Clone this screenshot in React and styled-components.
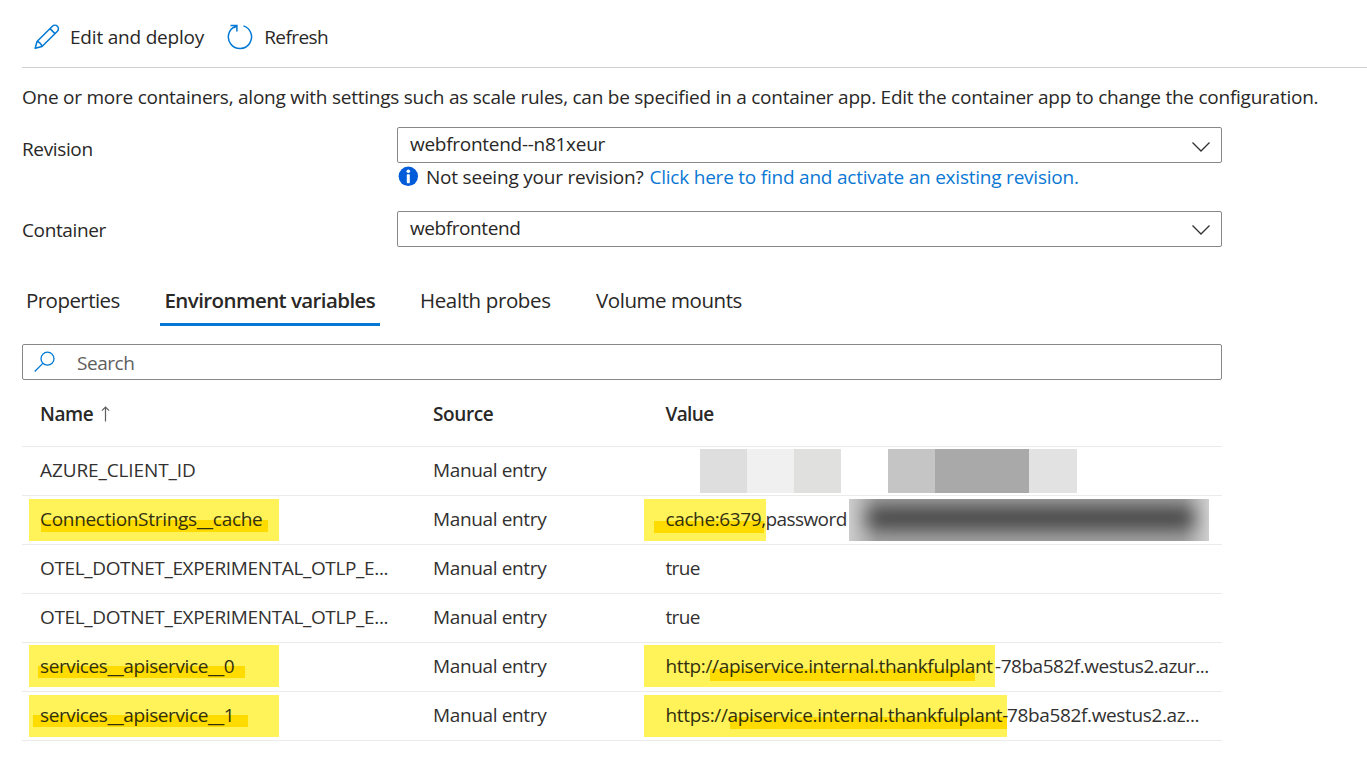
import React from "react";
import styled, { createGlobalStyle } from "styled-components";

const GlobalStyle = createGlobalStyle`
  * { box-sizing: border-box; }
  body {
    margin: 0;
    background: #fff;
    color: #292827;
    font-family: "Open Sans", "Noto Sans", sans-serif;
    font-size: 19px;
    line-height: 26px;
    overflow: hidden;
  }
`;

const Page = styled.main`
  padding-left: 22px;
  height: 766px;
  overflow: hidden;
`;

const Label = styled.span`
  letter-spacing: ${(p) => p.$track || 0}px;
  white-space: pre;
`;

const Toolbar = styled.header`
  display: flex;
  align-items: center;
  height: 68px;
  padding: 6px 0 0 12px;
  border-bottom: 1px solid #d2d2d1;
`;

const ToolButton = styled.button`
  display: flex;
  align-items: center;
  gap: ${(p) => p.$gap}px;
  margin-right: 22.5px;
  padding: 0;
  border: 0;
  background: none;
  color: inherit;
  font: inherit;
`;

const Intro = styled.p`
  margin: 16px 0 0;
  height: 43px;
`;

const Form = styled.section`
  display: flex;
  flex-direction: column;
`;

const Field = styled.div`
  display: grid;
  grid-template-columns: 375px 825px;
  height: ${(p) => p.$height}px;
`;

const FieldName = styled.label`
  padding-top: ${(p) => p.$top}px;
`;

const Select = styled.div`
  display: flex;
  align-items: center;
  justify-content: space-between;
  height: 36px;
  padding: 0 11px 2px 12px;
  border: 1px solid #8a8886;
  border-radius: 2px;

  svg { margin-top: ${(p) => p.$arrowTop}px; }
`;

const Hint = styled.div`
  display: flex;
  align-items: center;
  height: 28px;
  padding-left: 1px;

  svg { margin: 0 8px 2px 0; }
`;

const Link = styled.a`
  margin-left: 6px;
  color: #0b78d4;
`;

const Tabs = styled.nav`
  display: flex;
  height: 45px;
  margin-top: 34px;
`;

const Tab = styled.div`
  width: ${(p) => p.$width}px;
  margin-right: ${(p) => p.$after}px;
  padding: 6px 0 0 ${(p) => p.$inset}px;
  border-bottom: 3px solid ${(p) => (p.$active ? "#0078d4" : "transparent")};
  font-size: 20.5px;
  font-weight: ${(p) => (p.$active ? 600 : 400)};
`;

const SearchBox = styled.div`
  display: flex;
  align-items: center;
  gap: 22px;
  width: 1200px;
  height: 36px;
  margin-top: 18px;
  padding-left: 11px;
  border: 1px solid #8a8886;
  border-radius: 2px;
  color: #605e5c;

  svg { margin-bottom: 2px; }
  span { padding-top: 2px; }
`;

const Table = styled.section`
  width: 1200px;
`;

const Row = styled.div`
  display: grid;
  grid-template-columns: 393px 229px 578px;
  height: ${(p) => (p.$head ? 67 : 49)}px;
  border-bottom: 1px solid #ebebea;
  font-weight: ${(p) => (p.$head ? 600 : 400)};
  color: ${(p) => (p.$head ? "#292827" : "#323130")};
`;

const Cell = styled.div`
  display: flex;
  align-items: center;
  padding: ${(p) => p.$pad || "0 0 2px 18px"};
  white-space: nowrap;
`;

const TopCell = styled(Cell)`
  align-items: flex-start;
`;

const Marker = styled.div`
  width: ${(p) => p.$width}px;
  height: 42px;
  padding: ${(p) => p.$textTop}px 0 0 ${(p) => p.$inset}px;
  background:
    linear-gradient(#ffdb00, #ffdb00) ${(p) => p.$stroke[0]}px ${(p) => p.$stroke[1]}px /
      ${(p) => p.$stroke[2]}px 12px no-repeat,
    #fff359;
  color: #32300f;
`;

const Rest = styled.div`
  width: ${(p) => (p.$width ? `${p.$width}px` : "auto")};
  padding-top: ${(p) => p.$top}px;
`;

const Mosaic = styled.div`
  display: flex;
  height: 44px;
`;

const Tile = styled.div`
  width: ${(p) => p.$width}px;
  background: ${(p) => p.$tone};
`;

const Redaction = styled.div`
  width: 360px;
  height: 42px;
  padding: 8px 15px 12px 18px;
  overflow: hidden;
  background: linear-gradient(90deg, #cdcdcd, #a2a2a2 28px, #a2a2a2 334px, #d0d0d0);
`;

const Smear = styled.div`
  height: 22px;
  border-radius: 8px;
  background: #414141;
  filter: blur(9px);
`;

const PencilIcon = () => (
  <svg width="26" height="26" viewBox="0 0 26 26" fill="none" stroke="#0078d4" strokeWidth="1.5" strokeLinejoin="round">
    <path d="M1.2 24.3 3 17.5 18.4 2.2a3.5 3.5 0 0 1 5 5L8 22.5Z" />
    <path d="m16 4.6 5 5M3 17.5c2.2.3 4.6 2.7 5 5" />
  </svg>
);

const RefreshIcon = () => (
  <svg width="26" height="26" viewBox="0 0 26 26" fill="none" stroke="#0078d4" strokeWidth="1.5">
    <path d="M16.5 1.9A11.6 11.6 0 1 1 8.6 2.2" />
    <path d="M3.5 1.5H9.9V7.5M9.9 1.5 7 3.8" />
  </svg>
);

const ChevronIcon = () => (
  <svg width="18" height="10" viewBox="0 0 18 10" fill="none" stroke="#323130" strokeWidth="1.3">
    <path d="M.5.5 9 9 17.5.5" />
  </svg>
);

const InfoIcon = () => (
  <svg width="20" height="20" viewBox="0 0 20 20">
    <circle cx="10.3" cy="10.3" r="9.7" fill="#015cda" />
    <circle cx="10.3" cy="5.3" r="1.8" fill="#fff" />
    <rect x="8.8" y="8.3" width="3" height="8.9" rx=".7" fill="#fff" />
  </svg>
);

const SearchIcon = () => (
  <svg width="21" height="21" viewBox="0 0 21 21" fill="none" stroke="#0078d4" strokeWidth="1.3">
    <circle cx="13.5" cy="7.7" r="6.5" />
    <path d="M8.8 12.4.7 20.5" />
  </svg>
);

const SortIcon = () => (
  <svg width="9" height="16" viewBox="0 0 9 16" fill="none" stroke="#605e5c" strokeWidth="1.2">
    <path d="M4.5 15.5V1.2M.9 4.6 4.5 1 8.1 4.6" />
  </svg>
);

const Source = () => (
  <Cell>
    <Label $track={-0.36}>Manual entry</Label>
  </Cell>
);

const MarkedRow = ({ top, textTop, name, value }) => (
  <Row>
    <TopCell $pad={`${top}px 0 0 7px`}>
      <Marker $width={250} $textTop={textTop} $inset={11} $stroke={name.stroke}>
        <Label $track={name.track}>{name.text}</Label>
      </Marker>
    </TopCell>
    <Source />
    <TopCell $pad={`${top}px 0 0`}>
      <Marker $width={value.width} $textTop={textTop} $inset={21.5} $stroke={value.stroke}>
        <Label $track={value.track}>{value.text}</Label>
      </Marker>
      <Rest $top={textTop} $width={value.restWidth}>
        <Label $track={value.restTrack}>{value.rest}</Label>
      </Rest>
      {value.redacted && (
        <Redaction>
          <Smear />
        </Redaction>
      )}
    </TopCell>
  </Row>
);

const PlainRow = () => (
  <Row>
    <Cell>
      <Label $track={-0.36}>OTEL_DOTNET_EXPERIMENTAL_OTLP_E...</Label>
    </Cell>
    <Source />
    <Cell $pad="0 0 2px 21.5px">
      <Label $track={-0.65}>true</Label>
    </Cell>
  </Row>
);

export default function App() {
  return (
    <Page>
      <GlobalStyle />
      <Toolbar>
        <ToolButton $gap={10}>
          <PencilIcon />
          <Label $track={-0.2}>Edit and deploy</Label>
        </ToolButton>
        <ToolButton $gap={11.5}>
          <RefreshIcon />
          <Label $track={-0.57}>Refresh</Label>
        </ToolButton>
      </Toolbar>
      <Intro>
        <Label $track={-0.243}>
          One or more containers, along with settings such as scale rules, can be specified in a container app. Edit the container app to change the configuration.
        </Label>
      </Intro>
      <Form>
        <Field $height={84}>
          <FieldName $top={9}>
            <Label $track={-0.36}>Revision</Label>
          </FieldName>
          <div>
            <Select $arrowTop={5}>
              <Label $track={-0.28}>webfrontend--n81xeur</Label>
              <ChevronIcon />
            </Select>
            <Hint>
              <InfoIcon />
              <Label $track={-0.21}>Not seeing your revision?</Label>
              <Link>
                <Label $track={-0.22}>Click here to find and activate an existing revision.</Label>
              </Link>
            </Hint>
          </div>
        </Field>
        <Field $height={36}>
          <FieldName $top={6}>
            <Label $track={-0.38}>Container</Label>
          </FieldName>
          <Select $arrowTop={3}>
            <Label $track={-0.42}>webfrontend</Label>
            <ChevronIcon />
          </Select>
        </Field>
      </Form>
      <Tabs>
        <Tab $width={102} $after={36} $inset={4}>
          <Label $track={-0.55}>Properties</Label>
        </Tab>
        <Tab $width={220} $after={35} $inset={4.5} $active>
          <Label $track={-0.58}>Environment variables</Label>
        </Tab>
        <Tab $width={141} $after={36} $inset={5}>
          <Label $track={-0.38}>Health probes</Label>
        </Tab>
        <Tab $width={156} $after={0} $inset={4}>
          <Label $track={-0.44}>Volume mounts</Label>
        </Tab>
      </Tabs>
      <SearchBox>
        <SearchIcon />
        <Label $track={-0.45}>Search</Label>
      </SearchBox>
      <Table>
        <Row $head>
          <Cell $pad="2px 0 0 18px">
            <Label $track={-0.45}>Name </Label>
            <Cell $pad="0 0 0 3px">
              <SortIcon />
            </Cell>
          </Cell>
          <Cell $pad="2px 0 0 18px">
            <Label $track={-0.4}>Source</Label>
          </Cell>
          <Cell $pad="2px 0 0 21.5px">
            <Label $track={-0.65}>Value</Label>
          </Cell>
        </Row>
        <Row>
          <Cell>
            <Label $track={-0.11}>AZURE_CLIENT_ID</Label>
          </Cell>
          <Source />
          <TopCell $pad="2px 0 0 56px">
            <Mosaic>
              <Tile $width={47} $tone="#dedede" />
              <Tile $width={47} $tone="#f0f0f0" />
              <Tile $width={47} $tone="#e0e0de" />
              <Tile $width={47} $tone="#fff" />
              <Tile $width={47} $tone="#c5c5c5" />
              <Tile $width={94} $tone="#a9a9a9" />
              <Tile $width={48} $tone="#e2e2e2" />
            </Mosaic>
          </TopCell>
        </Row>
        <MarkedRow
          top={3}
          textTop={7}
          name={{ text: "ConnectionStrings__cache", track: -0.3, stroke: [12, 21, 227] }}
          value={{
            text: "cache:6379,",
            track: -0.38,
            width: 121.5,
            stroke: [10, 22, 110],
            rest: "password",
            restTrack: -0.58,
            restWidth: 83.5,
            redacted: true,
          }}
        />
        <PlainRow />
        <PlainRow />
        <MarkedRow
          top={2}
          textTop={8}
          name={{ text: "services__apiservice__0", track: -0.39, stroke: [9, 21, 207] }}
          value={{
            text: "http://apiservice.internal.thankfulplant",
            track: -0.365,
            width: 351,
            stroke: [66, 24, 265],
            rest: "-78ba582f.westus2.azur...",
            restTrack: -0.47,
          }}
        />
        <MarkedRow
          top={3}
          textTop={7}
          name={{ text: "services__apiservice__1", track: -0.39, stroke: [4, 20, 215] }}
          value={{
            text: "https://apiservice.internal.thankfulplant-",
            track: -0.345,
            width: 363,
            stroke: [86, 22, 277],
            rest: "78ba582f.westus2.az...",
            restTrack: -0.36,
          }}
        />
      </Table>
    </Page>
  );
}
